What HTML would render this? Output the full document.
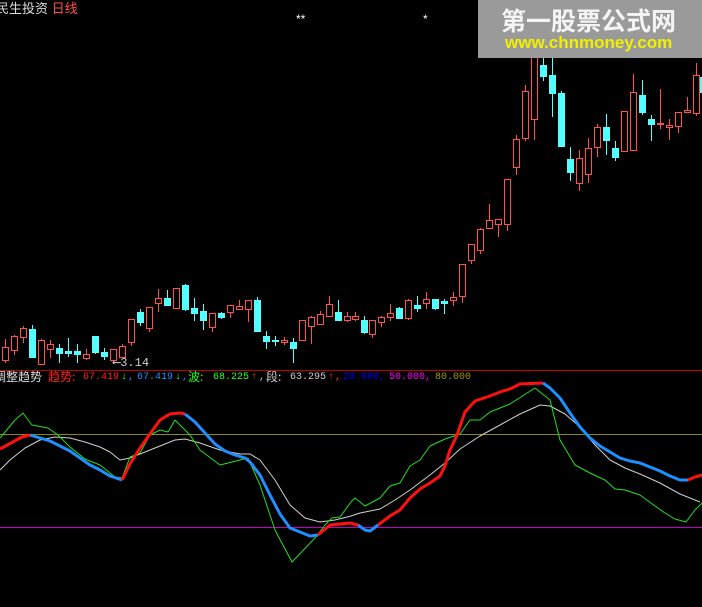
<!DOCTYPE html><html><head><meta charset="utf-8"><style>
body{margin:0;background:#000;width:702px;height:607px;overflow:hidden;font-family:"Liberation Sans","Noto Sans CJK SC",sans-serif}
svg{position:absolute;left:0;top:0}
.t{position:absolute;font-size:12px;white-space:nowrap;font-family:"Liberation Mono","Noto Sans CJK SC",monospace;line-height:12px}
.n{position:absolute;top:372px;font-size:10px;line-height:12px;white-space:nowrap;font-family:"Liberation Mono",monospace}
.k{position:absolute;top:371px;font-size:12px;line-height:12px;white-space:nowrap;font-family:"Noto Sans CJK SC",sans-serif}
</style></head><body>
<svg id="s" width="702" height="607" xmlns="http://www.w3.org/2000/svg" shape-rendering="crispEdges"></svg>
<div class="t" style="left:-4px;top:3px;font-size:13px;color:#ddd;font-family:'Liberation Sans','Noto Sans CJK SC',sans-serif">民生投资 <span style="color:#ff5050">日线</span></div>
<div class="t" style="left:113px;top:357px;color:#ccc">⟵3.14</div>
<div class="k" style="left:-6px;color:#ddd">调整趋势</div>
<div class="k" style="left:48px;color:#ff2020">趋势:</div>
<div class="n" style="left:83px;color:#ff2020">67.419</div>
<div class="n" style="left:121px;color:#40ff40">↓</div>
<div class="n" style="left:128px;color:#1e90ff">,</div>
<div class="n" style="left:137px;color:#1e90ff">67.419</div>
<div class="n" style="left:175px;color:#40ff40">↓</div>
<div class="n" style="left:182px;color:#1e90ff">,</div>
<div class="k" style="left:188px;color:#20ff20">波:</div>
<div class="n" style="left:213px;color:#20ff20">68.225</div>
<div class="n" style="left:251px;color:#ff3030">↑</div>
<div class="n" style="left:259px;color:#ccc">,</div>
<div class="k" style="left:266px;color:#ccc">段:</div>
<div class="n" style="left:290px;color:#ccc">63.295</div>
<div class="n" style="left:328px;color:#ff3030">↑</div>
<div class="n" style="left:335px;color:#ff3030">,</div>
<div class="n" style="left:343px;color:#0000ff">20.000,</div>
<div class="n" style="left:389px;color:#ff00ff">50.000,</div>
<div class="n" style="left:435px;color:#9a9a00">80.000</div>
<div style="position:absolute;left:478px;top:0;width:224px;height:58px;background:#9a9a9a"></div>
<div class="t" style="left:501px;top:6px;font-size:25px;line-height:28px;color:#f4f4f4;font-weight:bold;font-family:'Noto Sans CJK SC',sans-serif">第一股票公式网</div>
<div class="t" style="left:505px;top:34px;font-size:17px;line-height:18px;color:#f0f000;font-weight:bold;font-family:'Liberation Sans',sans-serif">www.chnmoney.com</div>
<script>
var c=[[5,'r',347,360,339,362],[14,'r',336,350,335,354],[23,'r',328,337,326,342],[32,'c',329,357,325,357],[41,'r',340,364,339,364],[50,'r',344,349,340,357],[59,'c',348,353,344,362],[68,'c',351,353,338,356],[77,'c',351,354,344,362],[86,'r',354,358,349,359],[95,'c',336,352,336,353],[104,'c',352,356,348,359],[113,'r',349,360,349,362],[122,'r',346,357,344,357],[131,'r',319,342,319,345],[140,'c',312,322,309,325],[149,'r',307,328,307,331],[158,'r',298,303,289,311],[167,'c',298,305,290,305],[176,'r',288,308,288,308],[185,'c',285,309,284,310],[194,'c',308,313,298,320],[203,'c',311,320,304,329],[212,'r',313,327,313,331],[221,'c',313,317,312,318],[230,'r',305,312,305,317],[239,'r',306,309,300,309],[248,'r',300,309,300,321],[257,'c',300,331,297,331],[266,'c',336,341,331,348],[275,'c',340,341,336,345],[284,'r',340,342,337,344],[293,'c',342,348,338,362],[302,'r',320,340,320,340],[311,'r',317,326,316,343],[320,'r',314,324,311,324],[329,'r',304,316,296,316],[338,'c',312,320,300,320],[347,'r',316,320,312,321],[355,'r',316,319,312,320],[364,'c',320,332,316,333],[372,'r',320,334,320,337],[381,'r',317,322,316,326],[390,'r',313,317,304,320],[399,'c',308,318,307,318],[408,'r',300,318,299,319],[417,'c',305,308,296,311],[426,'r',299,303,292,308],[435,'c',299,308,299,309],[444,'c',301,303,299,313],[453,'r',297,300,292,305],[462,'r',264,296,264,302],[471,'r',244,260,244,263],[480,'r',229,250,228,253],[489,'r',220,228,204,228],[498,'r',219,224,219,236],[507,'r',179,224,179,230],[516,'r',139,167,135,174],[525,'r',91,138,85,140],[534,'r',40,119,40,139],[543,'c',65,76,50,80],[552,'c',75,93,50,116],[561,'c',93,146,91,146],[570,'c',159,172,147,180],[579,'r',158,183,150,190],[588,'r',148,174,138,182],[597,'r',127,147,124,156],[606,'c',127,140,114,154],[615,'c',148,157,141,160],[624,'r',111,151,111,151],[633,'r',92,150,74,150],[642,'c',95,112,80,114],[651,'c',119,124,115,140],[660,'r',123,124,89,128],[669,'r',125,127,119,139],[678,'r',112,126,112,132],[687,'r',110,112,97,112],[696,'r',75,113,63,115],[703,'c',77,92,77,92]];
var h='';
c.forEach(function(k){var x=k[0],col=k[1]=='r'?'#ff5050':'#54ffff';
h+='<rect x="'+x+'" y="'+k[4]+'" width="1" height="'+(k[5]-k[4]+1)+'" fill="'+col+'"/>';
var hh=Math.max(k[3]-k[2],1);
if(k[1]=='r')h+='<rect x="'+(x-3)+'" y="'+k[2]+'" width="7" height="'+(hh+1)+'" fill="'+col+'"/><rect x="'+(x-2)+'" y="'+(k[2]+1)+'" width="5" height="'+Math.max(hh-1,0)+'" fill="#000"/>';
else h+='<rect x="'+(x-3)+'" y="'+k[2]+'" width="7" height="'+(hh+1)+'" fill="'+col+'"/>';});
h+='<text x="296" y="23" fill="#fff" font-size="12">**</text><text x="423" y="23" fill="#fff" font-size="12">*</text>';
h+='<rect x="0" y="370" width="702" height="1" fill="#c00000"/>';
h+='<rect x="0" y="434" width="702" height="1" fill="#8a8a00"/>';
h+='<rect x="0" y="527" width="702" height="1" fill="#c000c0"/>';
function pl(p,col,w){return '<polyline shape-rendering="auto" fill="none" stroke="'+col+'" stroke-width="'+w+'" stroke-linejoin="round" points="'+p+'"/>';}
h+=pl('0,470 10,460 25,448 40,440 55,437 70,438 85,442 100,447 110,452 120,460 130,458 145,452 160,446 175,440 185,439 200,443 220,450 240,454 250,454 260,460 275,480 290,505 305,518 320,522 335,520 351,516 360,513 380,509 395,500 410,490 430,475 445,463 460,449 480,436 500,425 520,414 540,405 550,406 565,414 580,427 595,445 610,460 625,468 640,474 660,483 680,494 700,502','#d0d0d0',1);
h+=pl('0,438 15,420 23,413 32,425 48,428 58,435 70,447 85,459 100,465 115,477 122,478 130,457 140,453 150,435 160,430 168,432 175,420 190,435 200,450 220,465 240,460 248,458 260,485 275,530 292,562 315,538 325,525 332,518 340,517 351,502 355,498 365,506 380,498 390,486 400,483 410,466 420,460 430,446 445,439 460,434 470,420 480,420 490,412 510,404 535,388 550,400 560,440 575,465 590,473 605,480 615,489 625,490 640,495 655,506 665,513 675,519 686,522 695,510 702,503','#20e020',1);
h+=pl('0,449 22,437 30,435','#ff1010',3);
h+=pl('30,435 40,438 50,441 60,446 70,451 80,458 90,465 100,470 110,476 122,480','#1e8fff',3);
h+=pl('122,480 130,464 140,448 150,434 160,420 170,414 180,413 185,414','#ff1010',3);
h+=pl('185,414 195,422 205,433 215,444 225,451 235,455 245,458 250,462 260,475 270,495 280,514 290,528 300,532 310,536 318,535','#1e8fff',3);
h+=pl('318,535 330,525 340,524 350,523 358,525','#ff1010',3);
h+=pl('358,525 365,530 370,531 378,525','#1e8fff',3);
h+=pl('378,525 390,516 400,510 410,498 420,489 430,483 440,476 445,466 450,450 457,435 465,412 475,401 490,396 500,392 510,389 520,384 543,383','#ff1010',3);
h+=pl('543,383 550,388 560,398 570,413 580,427 590,438 600,446 610,452 620,458 630,461 640,463 650,467 660,471 670,476 680,480 688,480','#1e8fff',3);
h+=pl('688,480 695,477 702,475','#ff1010',3);
document.getElementById('s').innerHTML=h;
</script>
</body></html>
